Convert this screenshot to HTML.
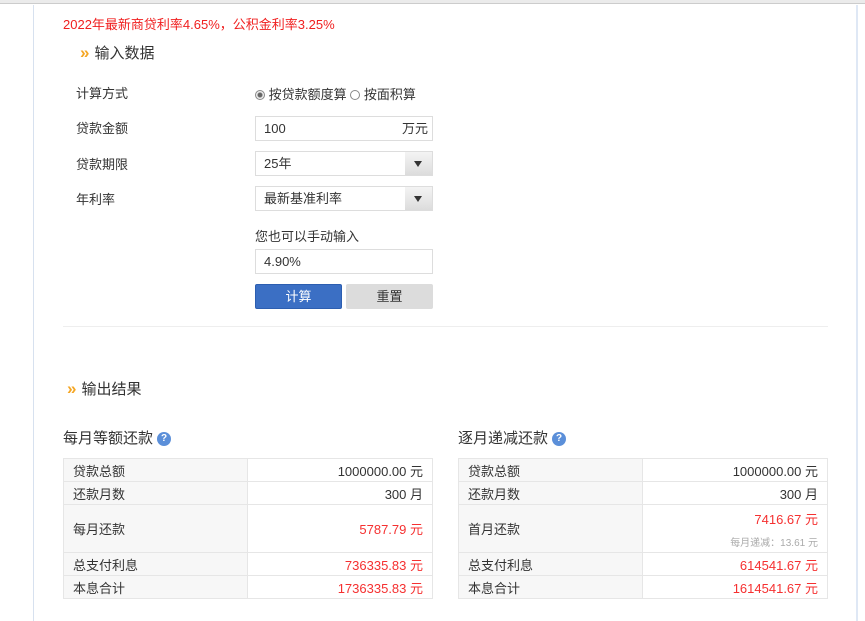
<!DOCTYPE html>
<html><head><meta charset="utf-8"><style>
*{margin:0;padding:0;box-sizing:border-box}
body{width:865px;height:621px;background:#fff;position:relative;overflow:hidden;font-family:"Liberation Sans","Noto Sans CJK SC",sans-serif;font-size:13px;color:#333}
.a{position:absolute}
.inp{position:absolute;border:1px solid #ddd;background:#fff;height:25px;line-height:23px;padding-left:8px;font-size:13px;color:#333}
.arr{position:absolute;right:0;top:0;width:27px;height:23px;background:linear-gradient(#f4f4f4,#dcdcdc);}
.arr:after{content:"";position:absolute;left:9px;top:9px;border-left:4px solid transparent;border-right:4px solid transparent;border-top:6px solid #333}
.lbl{position:absolute;left:76px;font-size:13px;color:#333}
table{position:absolute;border-collapse:collapse;font-size:13px}
td{border:1px solid #e6e6e6;height:23px;padding:0 9px}
td.k{background:#f7f7f7;width:184px}
td.v{text-align:right}
.r{color:#f53030}
.q{display:inline-block;width:14px;height:14px;border-radius:50%;background:#5b8fd9;color:#fff;font-size:10px;line-height:14px;text-align:center;font-weight:bold;vertical-align:2px;margin-left:4px}
.h{font-size:15px;color:#333}
.ch{color:#f5a623;font-weight:bold;font-size:17px;margin-right:5px}
</style></head><body>
<div class="a" style="left:0;top:0;width:865px;height:4px;background:#ebebeb;border-bottom:1px solid #ccc"></div>
<div class="a" style="left:33px;top:5px;width:1px;height:616px;background:#d7e1ef"></div>
<div class="a" style="left:856px;top:5px;width:2px;height:616px;background:#dfe8f5"></div>
<div class="a" style="left:63px;top:14px;color:#f02020;font-size:13px">2022年最新商贷利率4.65%，公积金利率3.25%</div>
<div class="a h" style="left:80px;top:42px"><span class="ch">»</span>输入数据</div>
<div class="lbl" style="top:83px">计算方式</div>
<div class="a" style="left:255px;top:84px;font-size:13px"><span style="display:inline-block;width:10px;height:10px;border:1px solid #888;border-radius:50%;background:radial-gradient(#666 2px,#eee 3px);vertical-align:-1px"></span> 按贷款额度算 <span style="display:inline-block;width:10px;height:10px;border:1px solid #888;border-radius:50%;vertical-align:-1px"></span> 按面积算</div>
<div class="lbl" style="top:118px">贷款金额</div>
<div class="inp" style="left:255px;top:116px;width:178px">100<span style="position:absolute;right:4px">万元</span></div>
<div class="lbl" style="top:154px">贷款期限</div>
<div class="inp" style="left:255px;top:151px;width:178px">25年<div class="arr"></div></div>
<div class="lbl" style="top:189px">年利率</div>
<div class="inp" style="left:255px;top:186px;width:178px">最新基准利率<div class="arr"></div></div>
<div class="a" style="left:255px;top:226px">您也可以手动输入</div>
<div class="inp" style="left:255px;top:249px;width:178px">4.90%</div>
<div class="a" style="left:255px;top:284px;width:87px;height:25px;background:#3b6fc4;border:1px solid #2c5eb0;border-radius:2px;color:#fff;text-align:center;line-height:23px">计算</div>
<div class="a" style="left:346px;top:284px;width:87px;height:25px;background:#dcdcdc;border-radius:2px;color:#333;text-align:center;line-height:25px">重置</div>
<div class="a" style="left:63px;top:326px;width:765px;height:1px;background:#eee"></div>
<div class="a h" style="left:67px;top:378px"><span class="ch">»</span>输出结果</div>
<div class="a h" style="left:63px;top:427px">每月等额还款<span class="q">?</span></div>
<div class="a h" style="left:458px;top:427px">逐月递减还款<span class="q">?</span></div>
<table style="left:63px;top:458px;width:370px">
<tr><td class="k">贷款总额</td><td class="v">1000000.00 元</td></tr>
<tr><td class="k">还款月数</td><td class="v">300 月</td></tr>
<tr><td class="k" style="height:48px">每月还款</td><td class="v r">5787.79 元</td></tr>
<tr><td class="k">总支付利息</td><td class="v r">736335.83 元</td></tr>
<tr><td class="k">本息合计</td><td class="v r">1736335.83 元</td></tr>
</table>
<table style="left:458px;top:458px;width:370px">
<tr><td class="k">贷款总额</td><td class="v">1000000.00 元</td></tr>
<tr><td class="k">还款月数</td><td class="v">300 月</td></tr>
<tr><td class="k" style="height:48px">首月还款</td><td class="v"><div class="r" style="margin-top:1px">7416.67 元</div><div style="color:#aaa;font-size:10px;margin-top:6px">每月递减：13.61 元</div></td></tr>
<tr><td class="k">总支付利息</td><td class="v r">614541.67 元</td></tr>
<tr><td class="k">本息合计</td><td class="v r">1614541.67 元</td></tr>
</table>
</body></html>
